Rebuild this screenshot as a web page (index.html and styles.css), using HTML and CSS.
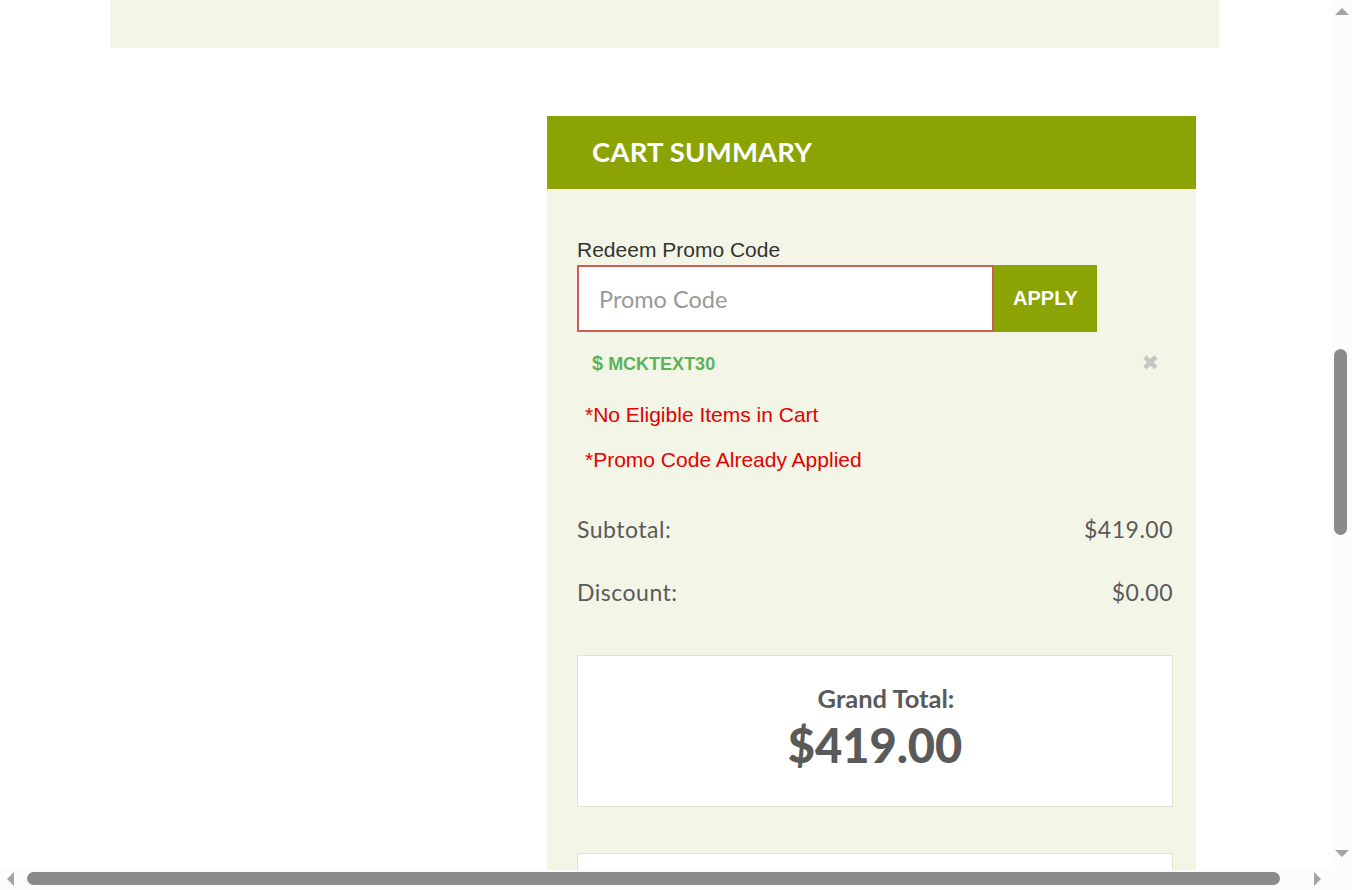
FILE: index.html
```html
<!DOCTYPE html>
<html>
<head>
<meta charset="utf-8">
<link rel="stylesheet" href="styles.css">
</head>
<body>
<div class="page">
  <div class="top-band"></div>
  <section class="cart">
    <header class="cart-head">CART SUMMARY</header>
    <div class="cart-body">
      <label class="promo-label">Redeem Promo Code</label>
      <div class="promo-row">
        <input class="promo-input" type="text" placeholder="Promo Code">
        <button class="promo-apply">APPLY</button>
      </div>
      <div class="applied">
        <span class="applied-code"><span class="dollar">$</span> MCKTEXT30</span>
        <span class="applied-x">&#x2716;</span>
      </div>
      <p class="err">*No Eligible Items in Cart</p>
      <p class="err err2">*Promo Code Already Applied</p>
      <div class="line line-sub"><span>Subtotal:</span><span>$419.00</span></div>
      <div class="line line-disc"><span>Discount:</span><span>$0.00</span></div>
      <div class="grand">
        <div class="grand-label">Grand Total:</div>
        <div class="grand-value">$419.00</div>
      </div>
      <div class="next-box"></div>
    </div>
  </section>
</div>

<div class="vscroll">
  <svg class="arrow-up" width="16" height="10" viewBox="0 0 16 10"><polygon points="1,9 8,2 15,9" fill="#a3a3a3"/></svg>
  <div class="vthumb"></div>
  <svg class="arrow-down" width="16" height="10" viewBox="0 0 16 10"><polygon points="1,1 8,8 15,1" fill="#a3a3a3"/></svg>
</div>
<div class="hscroll">
  <svg class="arrow-left" width="10" height="16" viewBox="0 0 10 16"><polygon points="9,1 2,8 9,15" fill="#a3a3a3"/></svg>
  <div class="hthumb"></div>
  <svg class="arrow-right" width="10" height="16" viewBox="0 0 10 16"><polygon points="1,1 8,8 1,15" fill="#a3a3a3"/></svg>
</div>
</body>
</html>
```

FILE: styles.css
```css
html, body {
  margin: 0;
  padding: 0;
  background: #ffffff;
  overflow: hidden;
  height: 890px;
}
.page {
  width: 1332px;
  height: 870px;
  overflow: hidden;
}
.top-band {
  margin-left: 110px;
  width: 1109px;
  height: 48px;
  background: #f3f5e6;
}
.cart {
  margin-top: 68px;
  margin-left: 547px;
  width: 649px;
  background: #f3f5e6;
}
.cart-head {
  height: 73px;
  background: #8ba305;
  color: #ffffff;
  font-family: "Lato", "Open Sans", sans-serif;
  font-weight: 700;
  font-size: 27.5px;
  line-height: 72px;
  padding-left: 45px;
  letter-spacing: 0.2px;
}
.cart-body {
  padding: 49px 23px 0 30px;
  height: 700px;
}
.promo-label {
  display: block;
  font-family: "Liberation Sans", Arial, sans-serif;
  font-size: 21px;
  color: #333333;
  line-height: 24px;
  margin-bottom: 3px;
}
.promo-row {
  display: flex;
  width: 520px;
  height: 67px;
}
.promo-input {
  box-sizing: border-box;
  width: 417px;
  height: 67px;
  border: 2px solid #cd5d52;
  background: #ffffff;
  margin: 0;
  padding: 0 0 0 20px;
  font-family: "Lato", "Open Sans", sans-serif;
  font-size: 23.5px;
  color: #555;
  outline: none;
}
.promo-input::placeholder {
  color: #999999;
}
.promo-apply {
  width: 103px;
  height: 67px;
  border: 0;
  margin: 0;
  background: #8ba305;
  color: #ffffff;
  font-family: "Liberation Sans", Arial, sans-serif;
  font-weight: 700;
  font-size: 20px;
  padding: 0;
}
.applied {
  display: flex;
  justify-content: space-between;
  align-items: center;
  margin-top: 18px;
  padding-left: 15px;
  padding-right: 14px;
  height: 26px;
}
.applied-code {
  font-family: "Liberation Sans", Arial, sans-serif;
  font-weight: 700;
  font-size: 18px;
  color: #5cb35a;
}
.dollar {
  font-size: 20px;
}
.applied-x {
  font-family: "DejaVu Sans", sans-serif;
  font-size: 21px;
  color: #c6c6c6;
}
.err {
  margin: 0;
  padding-left: 8px;
  font-family: "Liberation Sans", Arial, sans-serif;
  font-size: 21px;
  color: #e30000;
  line-height: 24px;
  margin-top: 27px;
}
.err2 {
  margin-top: 21px;
}
.line {
  display: flex;
  justify-content: space-between;
  font-family: "Lato", "Open Sans", sans-serif;
  font-size: 23px;
  letter-spacing: 0.5px;
  color: #5a5a5a;
  line-height: 28px;
}
.line-sub {
  margin-top: 43px;
}
.line-disc {
  margin-top: 35px;
}
.grand {
  box-sizing: border-box;
  margin-top: 49px;
  height: 152px;
  background: #ffffff;
  border: 1px solid #e1e4d3;
  text-align: center;
  color: #5a5a5a;
  font-family: "Lato", "Open Sans", sans-serif;
  font-weight: 700;
  padding-top: 26px;
}
.grand-label {
  font-size: 25.5px;
  line-height: 32px;
  padding-left: 22px;
}
.grand-value {
  margin-top: 2px;
  font-size: 47px;
  line-height: 58px;
  font-weight: 900;
}
.next-box {
  margin-top: 46px;
  height: 60px;
  background: #ffffff;
  border: 1px solid #e1e4d3;
}

.vscroll {
  position: fixed;
  top: 0;
  right: 0;
  width: 20px;
  height: 870px;
  background: #fcfcfc;
}
.arrow-up {
  position: absolute;
  left: 2px;
  top: 6px;
}
.arrow-down {
  position: absolute;
  left: 2px;
  top: 849px;
}
.vthumb {
  position: absolute;
  left: 2px;
  top: 349px;
  width: 13px;
  height: 186px;
  border-radius: 7px;
  background: #8a8a8a;
}
.hscroll {
  position: fixed;
  left: 0;
  bottom: 0;
  width: 1352px;
  height: 20px;
  background: #fcfcfc;
}
.arrow-left {
  position: absolute;
  left: 5px;
  top: 1px;
}
.arrow-right {
  position: absolute;
  left: 1313px;
  top: 1px;
}
.hthumb {
  position: absolute;
  left: 27px;
  top: 2px;
  width: 1253px;
  height: 13px;
  border-radius: 7px;
  background: #8a8a8a;
}
```
